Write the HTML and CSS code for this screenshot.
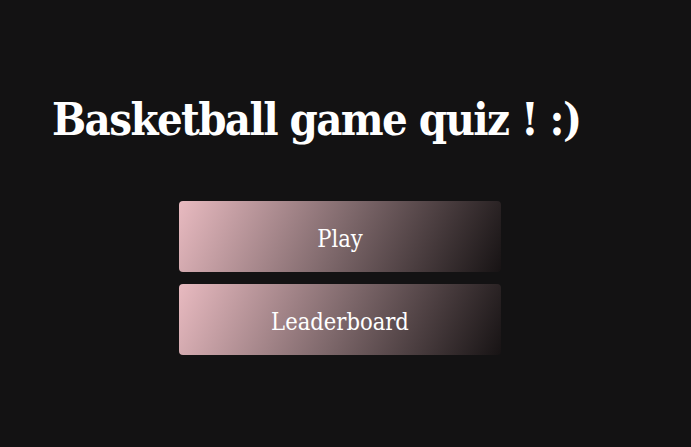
FILE: index.html
```html
<!DOCTYPE html>
<html>
<head>
<meta charset="utf-8">
<link rel="stylesheet" href="styles.css">
</head>
<body>
<main class="page">
  <h1 class="title">Basketball game quiz ! :)</h1>
  <div class="menu">
    <button class="btn">Play</button>
    <button class="btn">Leaderboard</button>
  </div>
</main>
</body>
</html>
```
FILE: styles.css
```css
html, body {
  margin: 0;
  padding: 0;
  background: #131213;
  height: 100%;
}
.page {
  padding: 86px 0 0 52px;
}
.title {
  margin: 0;
  font-family: "DejaVu Serif", serif;
  font-stretch: condensed;
  font-weight: bold;
  font-size: 45px;
  line-height: 68px;
  color: #ffffff;
  letter-spacing: -1.6px;
}
.menu {
  margin: 47px 0 0 127px;
  width: 322px;
  display: flex;
  flex-direction: column;
  gap: 12px;
}
.btn {
  height: 71px;
  padding: 4px 0 0;
  border: none;
  border-radius: 4px;
  background: linear-gradient(115deg, #e8bac0 0%, #7e686b 50%, #171314 100%);
  color: #ffffff;
  font-family: "DejaVu Serif", serif;
  font-stretch: condensed;
  font-size: 23.5px;
  cursor: pointer;
}
```
